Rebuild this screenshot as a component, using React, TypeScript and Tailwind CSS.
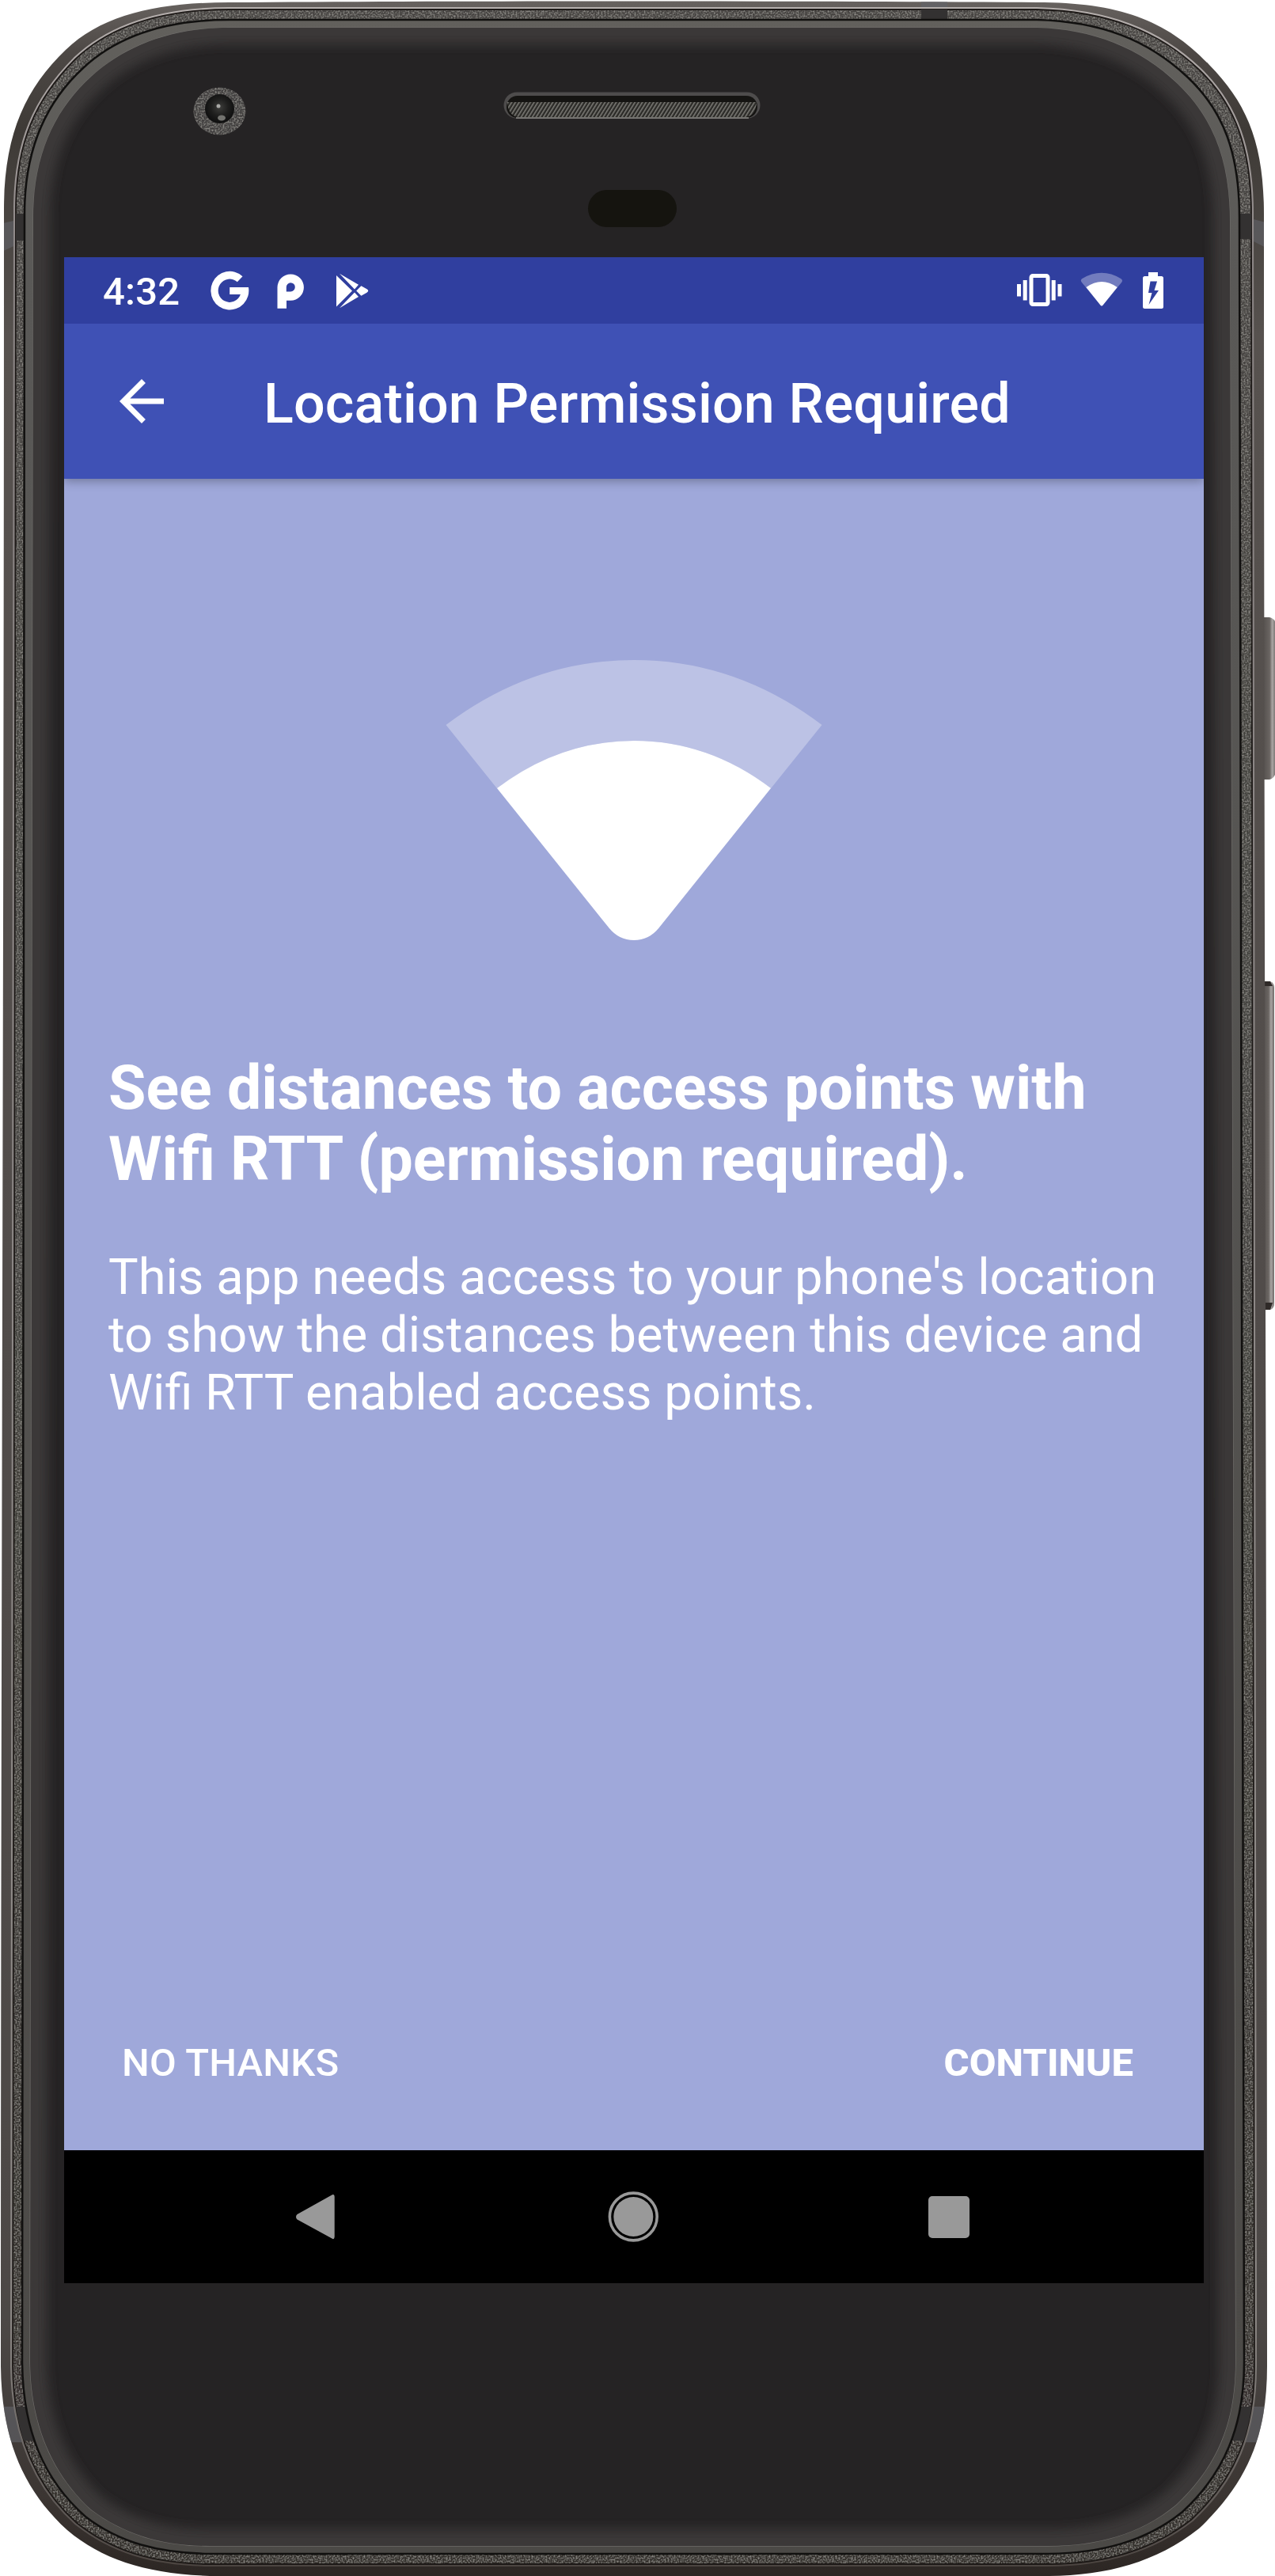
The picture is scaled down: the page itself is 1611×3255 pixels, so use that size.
const OUTER =
  "M290 3 C580 1 1020 1 1310 3 C1415 3 1475 26 1528 82 C1575 130 1597 180 1597 270 C1597 1200 1601 2100 1601 2990 C1601 3080 1575 3138 1515 3195 C1460 3238 1400 3254 1325 3255 L265 3255 C185 3252 130 3235 85 3197 C28 3145 2 3080 1 2990 C1 2100 5 1200 5 265 C5 170 32 112 83 63 C130 18 200 3 290 3 Z";
const LEDGE =
  "M290 12 L1310 12 C1400 14 1465 40 1515 88 C1562 133 1581 190 1581 270 L1585 2990 C1585 3075 1560 3133 1505 3184 C1455 3223 1395 3240 1325 3240 L265 3240 C190 3239 140 3222 97 3188 C43 3140 17 3075 16 2990 L20 265 C20 180 45 125 95 75 C140 32 205 12 290 12 Z";
const INNER =
  "M290 25 L1310 25 C1390 27 1450 50 1500 97 C1547 141 1566 195 1566 275 L1572 2985 C1572 3066 1547 3125 1494 3174 C1447 3212 1390 3226 1325 3227 L265 3227 C200 3226 151 3213 108 3180 C55 3133 29 3071 28 2985 L31 270 C31 190 57 130 105 86 C150 44 215 25 290 25 Z";
const GLASS =
  "M290 35 L1310 35 C1380 37 1440 60 1488 106 C1534 150 1554 205 1554 280 L1561 2985 C1561 3061 1538 3116 1486 3165 C1440 3203 1385 3217 1325 3217 L265 3217 C205 3217 158 3203 115 3171 C64 3124 39 3061 38 2985 L42 275 C42 195 70 138 115 97 C160 56 220 35 290 35 Z";

function PhoneBody() {
  return (
    <svg className="absolute inset-0" width="1611" height="3255" viewBox="0 0 1611 3255" aria-hidden="true">
      <defs>
        <linearGradient id="metal" x1="0" y1="0" x2="0" y2="1">
          <stop offset="0" stopColor="#67625f" />
          <stop offset=".02" stopColor="#4d4845" />
          <stop offset=".05" stopColor="#3e3a36" />
          <stop offset=".13" stopColor="#57524f" />
          <stop offset=".5" stopColor="#514c4a" />
          <stop offset=".9" stopColor="#4c4846" />
          <stop offset=".97" stopColor="#3b3532" />
          <stop offset="1" stopColor="#2c2623" />
        </linearGradient>
        <linearGradient id="shine" x1="0" y1="0" x2="0" y2="1">
          <stop offset="0" stopColor="#b5afad" />
          <stop offset=".1" stopColor="#8b8585" />
          <stop offset=".9" stopColor="#8e8a87" />
          <stop offset=".985" stopColor="#5b5552" />
          <stop offset="1" stopColor="#4c4541" />
        </linearGradient>
        <linearGradient id="ledge" x1="0" y1="0" x2="0" y2="1">
          <stop offset="0" stopColor="#454340" />
          <stop offset=".5" stopColor="#42413c" />
          <stop offset=".93" stopColor="#302c29" />
          <stop offset="1" stopColor="#322e2b" />
        </linearGradient>
        <linearGradient id="rim" x1="0" y1="0" x2="0" y2="1">
          <stop offset="0" stopColor="#62605c" />
          <stop offset=".1" stopColor="#5a5957" />
          <stop offset="1" stopColor="#4b4946" />
        </linearGradient>
        <linearGradient id="key" x1="0" y1="0" x2="1" y2="0">
          <stop offset="0" stopColor="#45413f" />
          <stop offset=".65" stopColor="#6a6562" />
          <stop offset=".8" stopColor="#aaa6a4" />
          <stop offset="1" stopColor="#6f6a68" />
        </linearGradient>
        <filter id="soft" x="-5%" y="-5%" width="110%" height="110%">
          <feGaussianBlur stdDeviation="7" />
        </filter>
        <filter id="grain" x="0" y="0" width="100%" height="100%">
          <feTurbulence type="fractalNoise" baseFrequency=".5" numOctaves="2" seed="4" result="n" />
          <feColorMatrix in="n" type="matrix" values="0 0 0 0 .6  0 0 0 0 .58  0 0 0 0 .54  1 0 0 0 -.42" result="g" />
          <feComposite in="g" in2="SourceGraphic" operator="in" result="m" />
          <feMerge>
            <feMergeNode in="SourceGraphic" />
            <feMergeNode in="m" />
          </feMerge>
        </filter>
        <clipPath id="glassClip">
          <path d={GLASS} />
        </clipPath>
        <clipPath id="bodyClip">
          <path d={OUTER} />
        </clipPath>
        <clipPath id="ledgeClip">
          <path d={LEDGE} />
        </clipPath>
        <pattern id="mesh" width="4" height="4" patternUnits="userSpaceOnUse" patternTransform="rotate(32)">
          <rect width="4" height="4" fill="#2b2a27" />
          <rect width="1.6" height="4" fill="#7b7a75" />
        </pattern>
        <radialGradient id="lens" cx=".5" cy=".45" r=".5">
          <stop offset="0" stopColor="#3d3d3b" />
          <stop offset=".6" stopColor="#1e1e1d" />
          <stop offset="1" stopColor="#111" />
        </radialGradient>
      </defs>

      {/* side keys */}
      <path d="M1590 767 L1604 767 Q1611 769 1612 775 L1612 872 Q1610 880 1604 881 L1590 881 Z" className="hidden" />
      <path d="M1590 780 L1604 780 Q1611 782 1612 788 L1612 976 Q1610 984 1604 985 L1590 985 Z" fill="url(#key)" />
      <path d="M1590 1240 L1605 1240 Q1610 1242 1610 1248 L1610 1646 Q1610 1654 1605 1655 L1590 1655 Z" fill="url(#key)" />
      <path d="M1596 1240 h9 l3 6 h-12z M1596 1646 h12 l-3 9 h-9z" fill="#2f2a28" />

      {/* metal shell */}
      <path d={OUTER} fill="url(#metal)" />
      <g clipPath="url(#bodyClip)">
        <path
          d="M0 283 L30 276 V305 L0 319z M1580 276 L1611 284 V319 L1580 303z M0 3041 h40 l8 45 h-48z M1560 3041 h51 v45 h-57z M1164 0 h33 v26 h-33z"
          fill="#62646a"
          opacity=".6"
        />
        <path d={LEDGE} fill="none" stroke="url(#shine)" strokeWidth="6" />
      </g>
      <path d={LEDGE} fill="url(#ledge)" filter="url(#grain)" />
      <path d={LEDGE} fill="none" stroke="#1d1917" strokeWidth="1.8" />
      <g clipPath="url(#ledgeClip)">
        <path
          d="M0 270 h34 v34 h-34z M1562 270 h24 v32 h-24z M0 3041 h52 v43 h-52z M1550 3041 h40 v43 h-40z M1164 12 h33 v14 h-33z"
          fill="#333131"
        />
      </g>

      {/* glass front */}
      <path d={INNER} fill="url(#rim)" stroke="#11100f" strokeWidth="2.5" />
      <path d={GLASS} fill="#252324" stroke="#6d6b68" strokeWidth="1.4" />
      <g clipPath="url(#glassClip)">
        <path d={GLASS} fill="none" stroke="#3a3937" strokeWidth="42" filter="url(#soft)" />
      </g>

      {/* camera */}
      <ellipse cx="277.500" cy="140.500" rx="33" ry="30" fill="#403e3e" filter="url(#grain)" />
      <circle cx="277.500" cy="137.500" r="18.500" fill="url(#lens)" />
      <circle cx="276" cy="134" r="2.500" fill="#a9a9a6" />
      <ellipse cx="280" cy="149" rx="5" ry="3.500" fill="#73736f" />

      {/* earpiece */}
      <rect x="636.500" y="116.500" width="324" height="33" rx="16.500" fill="#4e4c4c" />
      <rect x="640" y="121" width="317" height="28" rx="14" fill="#151412" />
      <path d="M641 129 H956 Q955 148 940 148 H656 Q642 147 641 129z" fill="url(#mesh)" />
      <path d="M652 149 H946" stroke="#92908c" strokeWidth="1.500" />

      {/* proximity sensor */}
      <rect x="743" y="240" width="112" height="47" rx="23.500" fill="#15140f" />
    </svg>
  );
}

function StatusBar() {
  return (
    <div className="flex h-[84px] w-full items-center bg-[#303f9f]">
      <span className="mt-[4px] ml-[49px] w-[96px] text-[49px] leading-[84px] font-medium tracking-[0.2px] whitespace-nowrap">
        4:32
      </span>
      <svg className="ml-[35px] h-[84px] w-[220px]" viewBox="0 0 220 84" fill="#fff" aria-hidden="true">
        <path d="M45.500 24.200 L38.800 31.200 A14.500 14.700 0 1 0 42.900 47 H29.200 V38 H53 A24 24.300 0 1 1 45.500 24.200 Z" />
        <path
          fillRule="evenodd"
          d="M89.500 64.700 V38 A16.700 16.700 0 1 1 106.300 54.800 H101 V64.700 Z M106.200 32.200 A5.600 5.600 0 0 0 100.800 37.800 V43.400 H106.200 A5.600 5.600 0 0 0 106.200 32.200 Z"
        />
        <path d="M164 23 V62.500 L184 42.400 Z M168 20.700 L192 34.700 L187 40.400 Z M168 64.300 L192 50 L187 44.600 Z M189.200 42.400 L195.400 36.200 L202.500 40.200 Q206 42.400 202.500 44.700 L195.400 48.700 Z" />
      </svg>
      <svg className="mr-[50px] ml-auto h-[84px] w-[188px]" viewBox="0 0 188 84" fill="#fff" aria-hidden="true">
        <path d="M2 34 h5 v15.500 h-5z M9.700 29 h5 v25.500 h-5z M45.700 29 h5 v25.500 h-5z M53.500 34 h5 v15.500 h-5z" />
        <rect x="20" y="23.500" width="21" height="36" rx="2" fill="none" stroke="#fff" strokeWidth="5" />
        <path
          d="M83.600 31.500 Q81.800 29 84 27.200 Q109 12.400 133.500 27.200 Q136 29 134.400 31.500 L110.800 60.200 Q109 63 107.200 60.200z"
          opacity=".32"
        />
        <path d="M89.400 38 Q109 24 128.700 38 L110.600 60.400 Q109 62.700 107.400 60.400z" />
        <path
          fillRule="evenodd"
          d="M168 19 h12 v5 h4.500 q2.500 0 2.500 2.500 v36 q0 2.500 -2.500 2.500 h-21 q-2.500 0 -2.500 -2.500 v-36 q0 -2.500 2.500 -2.500 h4.500z M170.500 30.500 L168 45 h4.500 L168.500 60 L181 42 h-5.500 L179 30.500z"
        />
      </svg>
    </div>
  );
}

function AppBar() {
  return (
    <header className="relative flex h-[196px] items-center bg-[#3f51b5] shadow-[0_3px_12px_rgba(0,0,0,0.3)] [clip-path:inset(0_0_-24px_0)]">
      <svg className="ml-[56px] h-[84px] w-[84px]" viewBox="0 0 24 24" fill="#fff" aria-hidden="true">
        <path d="M20 11H7.830l5.590-5.590L12 4l-8 8 8 8 1.410-1.410L7.830 13H20v-2z" />
      </svg>
      <h1 className="mt-[6px] ml-[112px] text-[70px] leading-[82px] font-medium tracking-[0.16px] whitespace-nowrap">
        Location Permission Required
      </h1>
    </header>
  );
}

function NavBar() {
  return (
    <nav className="flex h-[168px] items-center bg-black">
      <svg className="ml-[291px] h-[60px] w-[54px]" viewBox="0 0 54 60" fill="#999" aria-hidden="true">
        <path d="M3.500 27 L46.500 3 Q50.500 0 50.700 5 V55 Q50.500 60 46.500 57 L3.500 33.500 Q0.500 30 3.500 27z" />
      </svg>
      <svg className="ml-[341px] h-[66px] w-[66px]" viewBox="0 0 66 66" aria-hidden="true">
        <circle cx="33.300" cy="33" r="29.900" fill="none" stroke="#999" strokeWidth="3.600" />
        <circle cx="33.300" cy="33" r="25" fill="#999" />
      </svg>
      <div className="ml-[340px] h-[53px] w-[52px] rounded-[5px] bg-[#999]" />
    </nav>
  );
}

export default function App() {
  return (
    <div className="relative h-[3255px] w-[1611px] overflow-hidden bg-white pt-[325px] pl-[81px] font-[Roboto,sans-serif] text-white">
      <PhoneBody />
      <div className="relative flex h-[2560px] w-[1440px] flex-col overflow-hidden bg-[#9fa8da]">
        <StatusBar />
        <AppBar />
        <main className="flex flex-1 flex-col">
          <svg className="mt-[229px] ml-[482px] h-[356px] w-[476px]" viewBox="0 0 476 356" fill="#fff" aria-hidden="true">
            <path d="M0.500 82 Q109 0 238 0 Q367 0 475.500 82 L411 162.300 Q332 102 238 102 Q144 102 65 162.300 Z" opacity=".3" />
            <path d="M65 162 Q144 102 238 102 Q332 102 411 162 L269.500 338.500 Q257 354 238 354 Q219 354 206.500 338.500z" />
          </svg>
          <h2 className="mt-[140px] ml-[56px] text-[77.13px] leading-[90px] font-bold whitespace-nowrap">
            See distances to access points with
            <br />
            Wifi RTT (permission required).
          </h2>
          <p className="mt-[67px] ml-[56px] text-[63.2px] leading-[73px] whitespace-nowrap">
            This app needs access to your phone&apos;s location
            <br />
            to show the distances between this device and
            <br />
            Wifi RTT enabled access points.
          </p>
          <div className="mt-auto mb-[81px] flex justify-between pr-[89px] pl-[73px] text-[49px] leading-[58px]">
            <button className="font-medium tracking-[0.2px]">NO THANKS</button>
            <button className="font-extrabold">CONTINUE</button>
          </div>
        </main>
        <NavBar />
      </div>
    </div>
  );
}
